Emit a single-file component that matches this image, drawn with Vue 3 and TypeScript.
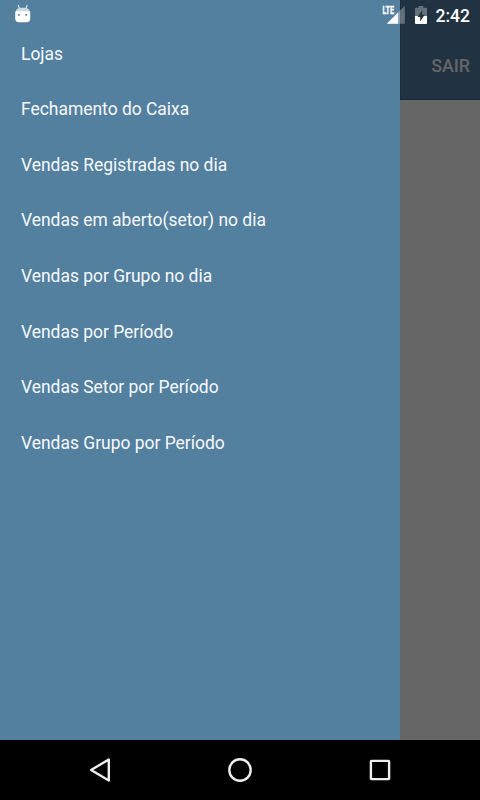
<script setup lang="ts">
const menuItems: string[] = [
  'Lojas',
  'Fechamento do Caixa',
  'Vendas Registradas no dia',
  'Vendas em aberto(setor) no dia',
  'Vendas por Grupo no dia',
  'Vendas por Período',
  'Vendas Setor por Período',
  'Vendas Grupo por Período',
]
</script>

<template>
  <div class="screen">
    <main class="body">
      <nav class="drawer">
        <a v-for="item in menuItems" :key="item" class="entry">{{ item }}</a>
      </nav>
      <section class="page">
        <header class="toolbar"><span class="exit">SAIR</span></header>
      </section>
    </main>

    <footer class="navbar">
      <svg width="40" height="40" viewBox="0 0 40 40" class="nav-icon">
        <path d="M11.1 20 L28.8 9.5 V30.5 Z" />
      </svg>
      <svg width="40" height="40" viewBox="0 0 40 40" class="nav-icon">
        <circle cx="20" cy="20" r="10.7" />
      </svg>
      <svg width="40" height="40" viewBox="0 0 40 40" class="nav-icon">
        <rect x="10.9" y="10.9" width="18.2" height="18.2" rx="0.6" />
      </svg>
    </footer>

    <div class="status">
      <svg class="robot" width="16" height="20" viewBox="0 0 16 20">
        <path d="M3.2 1 L4.4 4.5 M12.2 1 L11 4.5" stroke="#d7e2ea" stroke-width="1.1" fill="none" />
        <path d="M0.6 8.6 Q1 4 5 3.7 H10.5 Q14.5 4 14.9 8.6 Z" fill="#cbdae4" />
        <path d="M0.2 8.6 Q0.2 7.2 1.6 7.2 H13.8 Q15.2 7.2 15.2 8.6 V14.6 Q15.2 18.2 11.6 18.2 H3.8 Q0.2 18.2 0.2 14.6 Z" fill="#fff" />
        <rect x="3" y="10" width="1.9" height="1.8" fill="#7594a9" />
        <rect x="10.2" y="10" width="1.9" height="1.8" fill="#7594a9" />
      </svg>
      <svg class="signal" width="24" height="20" viewBox="0 0 24 20">
        <path d="M22.8 1.8 V19.8 H4.8 Z" fill="#fff" fill-opacity="0.3" />
        <path d="M16 8.6 V19.8 H4.8 Z" fill="#fff" />
        <text x="0.4" y="10" textLength="11.6" lengthAdjust="spacingAndGlyphs" class="lte">LTE</text>
      </svg>
      <svg class="battery" width="12" height="18" viewBox="0 0 12 18">
        <path d="M3.7 0 H8.3 V1.8 H11 Q12 1.8 12 2.8 V10 H0 V2.8 Q0 1.8 1 1.8 H3.7 Z" fill="#64717b" />
        <path d="M0 10 H12 V17 Q12 18 11 18 H1 Q0 18 0 17 Z" fill="#fff" />
        <path d="M7.2 4.3 L2.6 11 H5.2 V15.5 L9.7 8.8 H7.2 Z" fill="#203140" />
      </svg>
      <span class="clock">2:42</span>
    </div>
  </div>
</template>

<style>
body {
  margin: 0;
  background: #000;
}
</style>

<style scoped>
.screen {
  position: relative;
  display: flex;
  flex-direction: column;
  width: 480px;
  height: 800px;
  overflow: hidden;
  font-family: Roboto, "Liberation Sans", sans-serif;
}
.body {
  display: flex;
  height: 740px;
}
.drawer {
  box-sizing: border-box;
  display: flex;
  flex-direction: column;
  width: 400px;
  padding-top: 26.65px;
  background: #53809f;
}
.entry {
  display: block;
  height: 55.6px;
  padding-left: 21px;
  color: #f7f9fb;
  font-size: 17.45px;
  line-height: 55.6px;
  white-space: nowrap;
}
.page {
  width: 80px;
  background: #666;
}
.toolbar {
  box-sizing: border-box;
  display: flex;
  justify-content: flex-end;
  height: 100px;
  padding: 55px 10px 0 0;
  border-bottom: 1px solid #1a2a37;
  border-left: 1px solid #1c2c39;
  background: #213342;
}
.exit {
  color: #666;
  font-size: 17.8px;
  font-weight: 500;
  line-height: 22px;
}
.navbar {
  display: flex;
  justify-content: center;
  align-items: center;
  gap: 100px;
  height: 60px;
  background: #000;
}
.nav-icon {
  fill: none;
  stroke: #eee;
  stroke-width: 2.4;
  stroke-linejoin: round;
}
.status {
  position: absolute;
  top: 0;
  left: 0;
  box-sizing: border-box;
  display: flex;
  align-items: flex-start;
  width: 480px;
  height: 30px;
  padding: 4px 10px 0 15px;
}
.signal {
  margin-left: auto;
}
.lte {
  fill: #fff;
  stroke: #fff;
  stroke-width: 0.3;
  font-size: 10.5px;
  font-weight: 700;
}
.battery {
  margin: 2px 9px 0;
}
.clock {
  color: #fff;
  font-size: 17.5px;
  font-weight: 500;
  line-height: 24px;
}
</style>
